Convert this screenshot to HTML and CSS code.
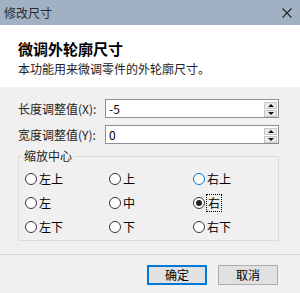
FILE: index.html
```html
<!DOCTYPE html>
<html lang="zh-CN">
<head>
    <meta charset="UTF-8">
    <title>修改尺寸</title>
    <link rel="stylesheet" href="styles.css">
</head>
<body>

<div class="dialog">
    <!-- Title bar -->
    <div class="titlebar">
        <span class="title">修改尺寸</span>
        <svg class="close" width="10" height="10" viewBox="0 0 10 10">
            <path d="M0.5 0.5 L9.5 9.5 M9.5 0.5 L0.5 9.5" stroke="#222" stroke-width="1.1" fill="none"/>
        </svg>
    </div>

    <!-- Header -->
    <div class="header">
        <h1>微调外轮廓尺寸</h1>
        <p>本功能用来微调零件的外轮廓尺寸。</p>
    </div>

    <!-- Form -->
    <div class="content">
        <div class="field">
            <label>长度调整值(X):</label>
            <div class="spin">
                <span class="spin-value">-5</span>
                <div class="spin-btns">
                    <span class="spin-btn"><i class="tri-up"></i></span>
                    <span class="spin-btn"><i class="tri-down"></i></span>
                </div>
            </div>
        </div>
        <div class="field">
            <label>宽度调整值(Y):</label>
            <div class="spin">
                <span class="spin-value">0</span>
                <div class="spin-btns">
                    <span class="spin-btn"><i class="tri-up"></i></span>
                    <span class="spin-btn"><i class="tri-down"></i></span>
                </div>
            </div>
        </div>

        <fieldset class="group">
            <legend>缩放中心</legend>
            <div class="radio-grid">
                <div class="radio-item"><span class="radio"></span><span>左上</span></div>
                <div class="radio-item"><span class="radio"></span><span>上</span></div>
                <div class="radio-item"><span class="radio hover"></span><span>右上</span></div>
                <div class="radio-item"><span class="radio"></span><span>左</span></div>
                <div class="radio-item"><span class="radio"></span><span>中</span></div>
                <div class="radio-item"><span class="radio checked"></span><span class="focus">右</span></div>
                <div class="radio-item"><span class="radio"></span><span>左下</span></div>
                <div class="radio-item"><span class="radio"></span><span>下</span></div>
                <div class="radio-item"><span class="radio"></span><span>右下</span></div>
            </div>
        </fieldset>
    </div>

    <!-- Buttons -->
    <div class="footer">
        <button class="btn btn-default">确定</button>
        <button class="btn">取消</button>
    </div>
</div>

</body>
</html>
```

FILE: styles.css
```css
body {
    margin: 0;
    padding: 0;
    font-family: "Noto Sans CJK SC", "Noto Sans", sans-serif;
    font-size: 12px;
    color: #000;
    background-color: #f0f0f0;
}

.dialog {
    width: 300px;
    height: 293px;
    display: flex;
    flex-direction: column;
    overflow: hidden;
}

.titlebar {
    height: 25px;
    background-color: #a0b1c4;
    display: flex;
    align-items: center;
    justify-content: space-between;
    padding: 0 8px 0 4px;
    flex-shrink: 0;
}

.title {
    font-size: 12px;
    color: #2a2a2a;
    line-height: 14px;
}

.header {
    height: 62px;
    background-color: #fff;
    padding: 15px 18px 0;
    box-sizing: border-box;
    flex-shrink: 0;
}

.header h1 {
    margin: 0;
    font-size: 15px;
    line-height: 18px;
    font-weight: bold;
}

.header p {
    margin: 3px 0 0;
    font-size: 12px;
    line-height: 16px;
    color: #222;
}

.content {
    padding: 12px 21px 0 18px;
}

.field {
    display: flex;
    align-items: center;
    height: 19px;
}

.field + .field {
    margin-top: 7px;
}

.field label {
    width: 87px;
    line-height: 16px;
    color: #222;
}

.spin {
    flex: 1;
    height: 19px;
    box-sizing: border-box;
    border: 1px solid #8f8f8f;
    background-color: #fff;
    display: flex;
}

.spin-value {
    flex: 1;
    padding-left: 3px;
    line-height: 17px;
}

.spin-btns {
    width: 13px;
    padding: 2px 1px 0 0;
    display: flex;
    flex-direction: column;
    gap: 1px;
}

.spin-btn {
    height: 7px;
    box-sizing: border-box;
    border: 1px solid #c8c8c8;
    background-color: #ebebeb;
    display: flex;
    align-items: center;
    justify-content: center;
}

.tri-up {
    width: 0;
    height: 0;
    border-left: 3px solid transparent;
    border-right: 3px solid transparent;
    border-bottom: 3px solid #111;
}

.tri-down {
    width: 0;
    height: 0;
    border-left: 3px solid transparent;
    border-right: 3px solid transparent;
    border-top: 3px solid #111;
}

/* Group box */
.group {
    margin: 5px 0 0;
    padding: 4px 0 1px 6px;
    border: 1px solid #dcdcdc;
    min-width: 0;
}

.group legend {
    padding: 0 2px;
    margin-left: -3px;
    line-height: 14px;
    color: #222;
}

.radio-grid {
    display: grid;
    grid-template-columns: 84px 84px 1fr;
    grid-auto-rows: 24px;
}

.radio-item {
    display: flex;
    align-items: center;
    gap: 2px;
    line-height: 16px;
}

.radio {
    width: 12px;
    height: 12px;
    box-sizing: border-box;
    border: 1px solid #333;
    border-radius: 50%;
    background-color: #fff;
    display: flex;
    align-items: center;
    justify-content: center;
}

.radio.hover {
    border-color: #0078d7;
}

.radio.checked::after {
    content: "";
    width: 6px;
    height: 6px;
    border-radius: 50%;
    background-color: #222;
}

.focus {
    outline: 1px dotted #000;
    padding: 0 1px;
}

/* Footer buttons */
.footer {
    margin-top: auto;
    height: 39px;
    box-sizing: border-box;
    border-top: 1px solid #d6d6d6;
    padding: 10px 22px 0 0;
    display: flex;
    justify-content: flex-end;
    gap: 11px;
}

.btn {
    width: 60px;
    height: 20px;
    box-sizing: border-box;
    border: 1px solid #adadad;
    background-color: #e1e1e1;
    font-family: inherit;
    font-size: 12px;
    color: #000;
    padding: 0;
    line-height: 16px;
}

.btn-default {
    border: 2px solid #0078d7;
}
```
